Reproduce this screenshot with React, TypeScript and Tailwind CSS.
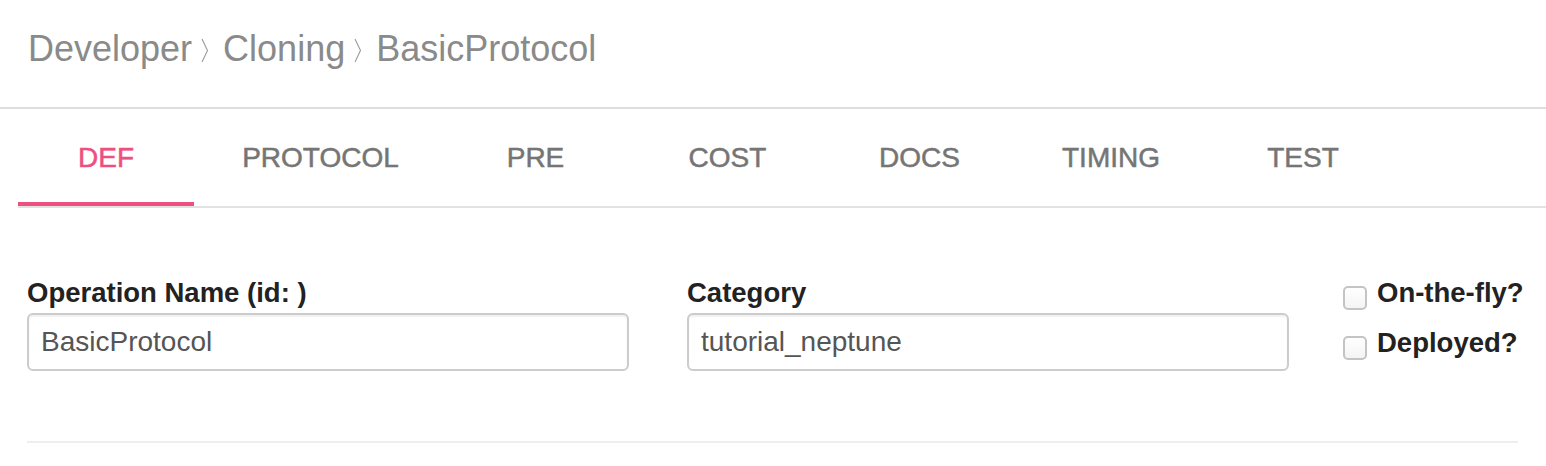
import React from "react";

const font = { fontFamily: '"Liberation Sans", Arial, Helvetica, sans-serif' };

function Chevron() {
  return (
    <svg width="8" height="25" viewBox="0 0 8 25" className="ml-[9px] mr-[14px] self-end mb-[4px]">
      <polyline points="1,1 6.5,12.5 1,24" fill="none" stroke="#9a9a9a" strokeWidth="1.1" />
    </svg>
  );
}

const tabs: { label: string; w: string; active?: boolean }[] = [
  { label: "DEF", w: "w-[176px]", active: true },
  { label: "PROTOCOL", w: "w-[253px]" },
  { label: "PRE", w: "w-[177px]" },
  { label: "COST", w: "w-[207px]" },
  { label: "DOCS", w: "w-[177px]" },
  { label: "TIMING", w: "w-[206px]" },
  { label: "TEST", w: "w-[178px]" },
];

function Checkbox() {
  return (
    <span className="mt-[8px] block h-[24px] w-[24px] shrink-0 rounded-[5px] border-2 border-[#c4c4c4] bg-gradient-to-b from-white to-[#f4f4f4]" />
  );
}

export default function App() {
  return (
    <div className="min-h-[466px] w-[1546px] bg-white" style={font}>
      {/* Breadcrumb header */}
      <div className="h-[109px] border-b-2 border-[#dedede] pl-[28px] pt-[31px]">
        <div className="flex items-end text-[36px] leading-[36px] text-[#8a8a8a]">
          <span>Developer</span>
          <Chevron />
          <span>Cloning</span>
          <Chevron />
          <span>BasicProtocol</span>
        </div>
      </div>

      {/* Tabs */}
      <div className="ml-[18px] flex border-b-2 border-[#e2e2e2]">
        {tabs.map((t) => (
          <div
            key={t.label}
            className={`${t.w} flex h-[97px] justify-center border-b-4 pt-[35px] text-[28px] leading-[28px] ${
              t.active
                ? "border-[#ec4f80] text-[#ec4f80] [-webkit-text-stroke:0.5px_#ec4f80]"
                : "border-transparent text-[#757575] [-webkit-text-stroke:0.5px_#757575]"
            }`}
          >
            {t.label}
          </div>
        ))}
      </div>

      {/* Form */}
      <div className="ml-[27px] mr-[28px] border-b-2 border-[#eeeeee] pb-[70px] pt-[70px]">
        <div className="flex">
          <div className="w-[602px] shrink-0">
            <div className="text-[27.5px] font-bold leading-[30px] text-[#222222]">Operation Name (id: )</div>
            <input
              readOnly
              defaultValue="BasicProtocol"
              className="mt-[5px] block h-[58px] w-full rounded-[6px] border-2 border-[#cccccc] px-[12px] text-[28px] text-[#555555] shadow-[inset_0_2px_2px_rgba(0,0,0,0.06)] outline-none"
              style={font}
            />
          </div>
          <div className="ml-[58px] w-[602px] shrink-0">
            <div className="text-[27.5px] font-bold leading-[30px] text-[#222222]">Category</div>
            <input
              readOnly
              defaultValue="tutorial_neptune"
              className="mt-[5px] block h-[58px] w-full rounded-[6px] border-2 border-[#cccccc] px-[12px] text-[28px] text-[#555555] shadow-[inset_0_2px_2px_rgba(0,0,0,0.06)] outline-none"
              style={font}
            />
          </div>
          <div className="ml-[54px] flex shrink-0 flex-col gap-[18px] whitespace-nowrap">
            <div className="flex items-start gap-[10px]">
              <Checkbox />
              <span className="text-[27.5px] font-bold leading-[30px] text-[#222222]">On-the-fly?</span>
            </div>
            <div className="flex items-start gap-[10px]">
              <Checkbox />
              <span className="text-[27.5px] font-bold leading-[30px] text-[#222222]">Deployed?</span>
            </div>
          </div>
        </div>
      </div>
    </div>
  );
}
